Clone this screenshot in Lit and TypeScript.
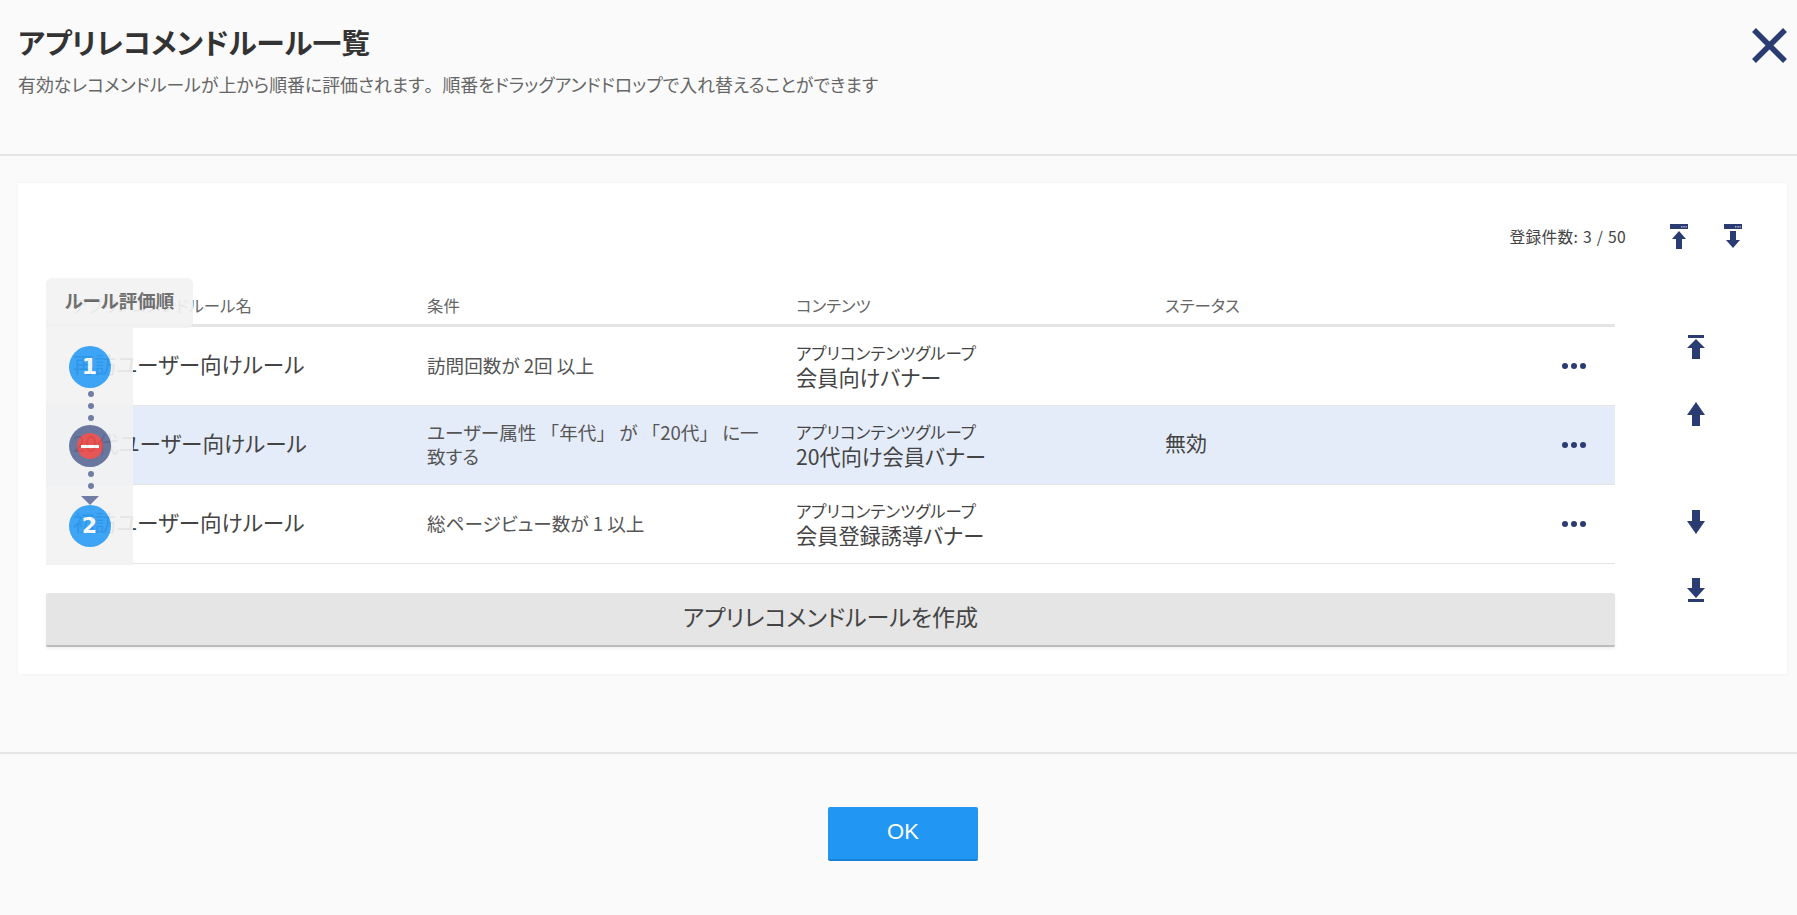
import { LitElement, html, css, svg } from "lit";
import { customElement } from "lit/decorators.js";

const NAVY = "#2a3c72";
const rules = [
  { name: "再訪ユーザー向けルール", cond: ["訪問回数が 2回 以上"], content: "会員向けバナー", status: "", off: false },
  { name: "20代ユーザー向けルール", cond: ["ユーザー属性 「年代」 が 「20代」 に一", "致する"], content: "20代向け会員バナー", status: "無効", off: true },
  { name: "初訪ユーザー向けルール", cond: ["総ページビュー数が 1 以上"], content: "会員登録誘導バナー", status: "", off: false },
];

/* Punctuation keeps its full em width, as in the reference; the kana stay proportional. */
const fw = (text: string) =>
  text.split(/([「」。])/).map((p) => (/^[「」。]$/.test(p) ? html`<span class="fw">${p}</span>` : p));

const bigIcon = (kind: string) => {
  const paths: Record<string, string> = {
    top: "M0 0h16v3H0z M8 4 L17 13 H12 V24 H4 V13 H-1 Z",
    up: "M8 0 L17 13 H12 V24 H4 V13 H-1 Z",
    down: "M4 0 H12 V11 H17 L8 24 L-1 11 H4 Z",
    bottom: "M4 0 H12 V10 H17 L8 20 L-1 10 H4 Z M0 21h16v3H0z",
  };
  return html`<svg class="big" viewBox="-1 0 18 24" width="18" height="24"><path fill=${NAVY} d=${paths[kind]}></path></svg>`;
};

const smallIcon = (up: boolean) => html`<svg class="small" viewBox="0 0 18 25" width="18" height="25">
  <rect x="0" y="0" width="18" height="5" fill=${NAVY}></rect>
  ${svg`<rect x="11" y="2.4" width="1" height="1" fill="#fff"/><rect x="12.6" y="2.4" width="1" height="1" fill="#fff"/><rect x="14.2" y="2.4" width="1" height="1" fill="#fff"/><rect x="15.8" y="2.4" width="1" height="1" fill="#fff"/>`}
  <path fill=${NAVY} d=${up ? "M9 7 L16 15 H12 V25 H6 V15 H2 Z" : "M6 7 H12 V16 H16 L9 24 L2 16 H6 Z"}></path>
</svg>`;

@customElement("app-root")
export class AppRoot extends LitElement {
  static styles = css`
    :host {
      display: block;
      width: 1797px;
      height: 915px;
      overflow: hidden;
      background: #fafafa;
      color: #333;
      font-family: "Noto Sans CJK JP", sans-serif;
      font-feature-settings: "palt";
    }
    .fw { font-feature-settings: normal; }
    .head {
      height: 154px;
      border-bottom: 2px solid #e5e5e5;
      padding: 0 10px 0 18px;
      display: flex;
      justify-content: space-between;
    }
    h1 {
      margin: 21px 0 0;
      font-size: 28.8px;
      line-height: 42px;
      font-weight: 700;
    }
    .sub {
      margin: 9px 0 0;
      font-size: 17.9px;
      line-height: 24px;
      color: #666;
    }
    .close { margin-top: 28px; display: block; }
    .card {
      margin: 27px 10px 0 18px;
      height: 491px;
      background: #fff;
      box-shadow: 0 0 2px rgba(0,0,0,.06);
      padding: 0 0 0 28px;
      display: grid;
      grid-template-columns: 1569px 1fr;
      grid-template-rows: 108px auto;
      position: relative;
    }
    .count {
      grid-column: 1 / 3;
      display: flex;
      justify-content: flex-end;
      align-items: center;
      height: 106px;
      padding-right: 45px;
      font-size: 15.7px;
      color: #444;
      word-spacing: 1px;
      letter-spacing: .3px;
    }
    .count span { margin-right: 8px; }
    .count svg { margin-left: 36px; }
    .th {
      display: grid;
      grid-template-columns: 354px 369px 369px 1fr;
      padding-left: 27px;
      height: 33px;
      border-bottom: 3px solid #e5e5e5;
      font-size: 16.4px;
      line-height: 28px;
      color: #666;
    }
    .row {
      display: grid;
      grid-template-columns: 354px 369px 369px 1fr 53px;
      padding-left: 27px;
      height: 78px;
      align-items: center;
      border-bottom: 1px solid #e5e5e5;
      background: #fff;
    }
    .row.off { background: #e5ecf9; }
    .name { font-size: 21.6px; color: #444; padding-bottom: 5px; }
    .cond { font-size: 18.6px; line-height: 24px; color: #555; white-space: nowrap; padding-bottom: 3px; }
    .ctype { font-size: 16.5px; line-height: 22px; color: #444; }
    .cname { font-size: 21.2px; line-height: 26px; color: #444; }
    .stat { font-size: 21px; color: #444; padding-bottom: 7px; }
    .more { display: flex; gap: 3px; }
    .more i { width: 6px; height: 6px; border-radius: 50%; background: #2a3c72; }
    .create {
      margin-top: 29px;
      height: 52px;
      border-bottom: 2px solid #bbb;
      border-radius: 2px;
      background: #e5e5e5;
      font-size: 23px;
      color: #444;
      text-align: center;
      line-height: 46px;
      box-shadow: 0 2px 3px rgba(0,0,0,.06);
    }
    .side {
      display: flex;
      flex-direction: column;
      align-items: center;
      padding-top: 44px;
      padding-right: 10px;
    }
    .side svg:nth-child(2) { margin-top: 43px; }
    .side svg:nth-child(3) { margin-top: 84px; }
    .side svg:nth-child(4) { margin-top: 44px; }
    .order {
      position: absolute;
      left: 28px;
      top: 95px;
      width: 147px;
      opacity: .92;
    }
    .tab {
      height: 50px;
      background: #f2f2f2;
      font-size: 18.5px;
      font-weight: 700;
      line-height: 44px;
      text-align: center;
      color: #666;
      border-radius: 6px 6px 6px 0;
    }
    .rail {
      width: 87px;
      height: 237px;
      background: #f2f2f2;
      display: flex;
      flex-direction: column;
      align-items: center;
      padding: 18px 0 0;
      box-sizing: border-box;
    }
    .num {
      width: 42px; height: 42px; border-radius: 50%;
      background: #2e9df5;
      color: #fff;
      font: 700 22px/42px "DejaVu Sans", sans-serif;
      text-align: center;
      flex: none;
    }
    .num.off { background: #5f6c97; display: flex; align-items: center; justify-content: center; }
    .stop { width: 26px; height: 26px; border-radius: 50%; background: #e84a4a; display: flex; align-items: center; justify-content: center; }
    .stop b { width: 18px; height: 3px; background: #fff; display: block; }
    .dots { display: flex; flex-direction: column; gap: 6px; padding: 3px 0 4px; margin-left: 2px; flex: none; }
    .dots.b { padding: 4px 0 0; }
    .dots i { width: 6px; height: 6px; border-radius: 50%; background: #67739e; display: block; }
    .tri { width: 0; height: 0; border: 9px solid transparent; border-top: 9px solid #67739e; border-bottom: 0; flex: none; margin-top: 7px; }
    .foot {
      margin-top: 78px;
      border-top: 2px solid #e5e5e5;
      display: flex;
      justify-content: center;
      padding: 53px 0 0 9px;
    }
    .ok {
      width: 150px;
      height: 52px;
      background: #2196f3;
      border-bottom: 2px solid #1a80d6;
      border-radius: 2px;
      color: #fff;
      font: 22px/50px "Liberation Sans", Arial, sans-serif;
      text-align: center;
    }
  `;

  render() {
    return html`
      <div class="head">
        <div>
          <h1>アプリレコメンドルール一覧</h1>
          <p class="sub">${fw("有効なレコメンドルールが上から順番に評価されます。順番をドラッグアンドドロップで入れ替えることができます")}</p>
        </div>
        <svg class="close" width="35" height="35" viewBox="0 0 35 35"><path d="M2 2 L33 33 M33 2 L2 33" stroke=${NAVY} stroke-width="5.5" fill="none"></path></svg>
      </div>
      <div class="card">
        <div class="count"><span>登録件数: 3 / 50</span>${smallIcon(true)}${smallIcon(false)}</div>
        <div class="table">
          <div class="th"><div>アプリレコメンドルール名</div><div>条件</div><div>コンテンツ</div><div>ステータス</div></div>
          ${rules.map(r => html`
            <div class="row ${r.off ? "off" : ""}">
              <div class="name">${r.name}</div>
              <div class="cond">${r.cond.map((c, i) => html`${i ? html`<br />` : ""}${fw(c)}`)}</div>
              <div><div class="ctype">アプリコンテンツグループ</div><div class="cname">${r.content}</div></div>
              <div class="stat">${r.status}</div>
              <div class="more"><i></i><i></i><i></i></div>
            </div>`)}
          <div class="create">アプリレコメンドルールを作成</div>
        </div>
        <div class="side">${bigIcon("top")}${bigIcon("up")}${bigIcon("down")}${bigIcon("bottom")}</div>
        <div class="order">
          <div class="tab">ルール評価順</div>
          <div class="rail">
            <div class="num">1</div>
            <div class="dots"><i></i><i></i><i></i></div>
            <div class="num off"><div class="stop"><b></b></div></div>
            <div class="dots b"><i></i><i></i></div>
            <div class="tri"></div>
            <div class="num">2</div>
          </div>
        </div>
      </div>
      <div class="foot"><div class="ok">OK</div></div>
    `;
  }
}
